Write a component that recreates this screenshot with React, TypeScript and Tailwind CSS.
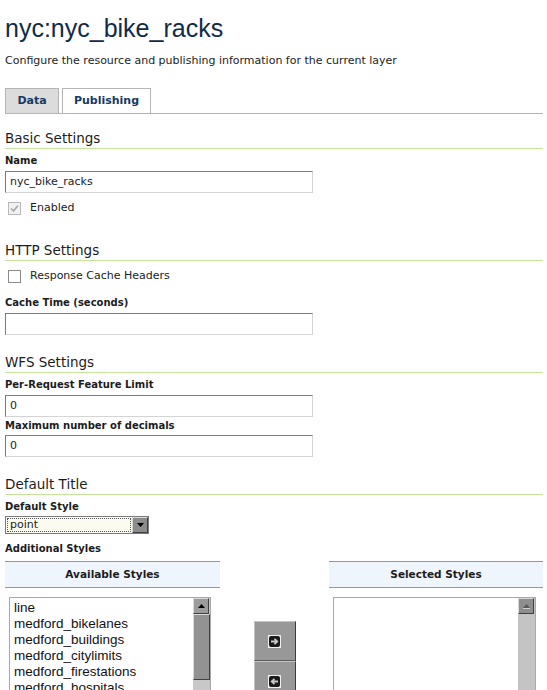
import React from 'react';

const ui = "font-['DejaVu_Sans',sans-serif]";

function SectionHeader({ title, className = '' }: { title: string; className?: string }) {
  return (
    <div
      className={`h-[21px] border-b border-[#c6e39a] text-[13.5px] leading-[20px] text-[#1c1c1c] ${className}`}
    >
      {title}
    </div>
  );
}

function Label({ text, className = '' }: { text: string; className?: string }) {
  return <div className={`h-4 text-[10px] font-bold leading-4 text-[#1c1c1c] ${className}`}>{text}</div>;
}

function TextInput({ value, className = '' }: { value: string; className?: string }) {
  return (
    <div
      className={`h-[22px] w-[308px] border border-t-[#7b7b7b] border-l-[#7b7b7b] border-r-[#d4d4d4] border-b-[#d4d4d4] bg-white pl-[4px] text-[11px] leading-[20px] text-[#222] ${className}`}
    >
      {value}
    </div>
  );
}

function Checkbox({ checked, disabled }: { checked?: boolean; disabled?: boolean }) {
  return (
    <div
      className={`mx-[3px] flex h-[13px] w-[13px] items-center justify-center border ${
        disabled ? 'border-[#b8b8b8] bg-[#f2f2f2]' : 'border-[#8a8a8a] bg-white'
      }`}
    >
      {checked && (
        <svg width="9" height="9" viewBox="0 0 9 9">
          <path d="M1 4.5 L3.5 7 L8 1.5" fill="none" stroke="#a8a8a8" strokeWidth="1.6" />
        </svg>
      )}
    </div>
  );
}

function ScrollUp({ disabled }: { disabled?: boolean }) {
  return (
    <div
      className={`flex h-[16px] w-[16px] items-center justify-center border border-t-[#d8d8d8] border-l-[#d8d8d8] border-r-[#404040] border-b-[#404040] ${
        disabled ? 'bg-[#8e8e8e]' : 'bg-[#9c9c9c]'
      }`}
    >
      <svg width="7" height="5" viewBox="0 0 7 5">
        <path d="M3.5 0 L7 4 L0 4 Z" fill={disabled ? '#5a5a5a' : '#000'} />
        {disabled && <path d="M0 4.5 H7" stroke="#cfcfcf" strokeWidth="1" />}
      </svg>
    </div>
  );
}

function MoveButton({ dir }: { dir: 'right' | 'left' }) {
  return (
    <div className="flex h-[40px] w-[42px] items-center justify-center border border-t-[#c4c4c4] border-l-[#c4c4c4] border-r-[#3c3c3c] border-b-[#5a5a5a] bg-[#989898]">
      <svg width="13" height="13" viewBox="0 0 13 13">
        <rect x="0" y="0" width="13" height="13" fill="#f0f0f0" />
        <rect x="1" y="1" width="11" height="11" rx="2" fill="#1a1a1a" />
        {dir === 'right' ? (
          <path d="M3 6.5 H9 M6.5 3.8 L9.3 6.5 L6.5 9.2" fill="none" stroke="#c8c8c8" strokeWidth="1.8" />
        ) : (
          <path d="M10 6.5 H4 M6.5 3.8 L3.7 6.5 L6.5 9.2" fill="none" stroke="#c8c8c8" strokeWidth="1.8" />
        )}
      </svg>
    </div>
  );
}

export default function App() {
  const available = [
    'line',
    'medford_bikelanes',
    'medford_buildings',
    'medford_citylimits',
    'medford_firestations',
    'medford_hospitals',
  ];

  return (
    <div className={`h-[690px] w-[547px] overflow-hidden bg-white pl-[5px] pr-[4px] ${ui}`}>
      {/* Title */}
      <div className="pt-[13px] font-['Liberation_Sans',sans-serif] text-[25px] leading-[30px] text-[#0f2b47]">
        nyc:nyc_bike_racks
      </div>
      <div className="mt-[10px] h-4 text-[11px] leading-4 text-[#222]">
        Configure the resource and publishing information for the current layer
      </div>

      {/* Tabs */}
      <div className="mt-[19px] flex h-[26px] items-end gap-[3px] border-b border-[#b4b4b4]">
        <div className="flex h-[25px] w-[54px] items-center justify-center border border-b-0 border-[#b4b4b4] bg-[#dcdcdc] text-[11px] font-bold text-[#173a63]">
          Data
        </div>
        <div className="flex h-[25px] w-[89px] items-center justify-center border border-b-0 border-[#b4b4b4] bg-white text-[11px] font-bold text-[#173a63]">
          Publishing
        </div>
      </div>

      {/* Basic Settings */}
      <SectionHeader title="Basic Settings" className="mt-[14px]" />
      <Label text="Name" className="mt-[4px]" />
      <TextInput value="nyc_bike_racks" className="mt-[2px]" />
      <div className="mt-[7px] flex h-4 items-center gap-[6px] text-[11px] text-[#222]">
        <Checkbox checked disabled />
        <span>Enabled</span>
      </div>

      {/* HTTP Settings */}
      <SectionHeader title="HTTP Settings" className="mt-[24px]" />
      <div className="mt-[7px] flex h-4 items-center gap-[6px] text-[11px] text-[#222]">
        <Checkbox />
        <span>Response Cache Headers</span>
      </div>
      <Label text="Cache Time (seconds)" className="mt-[11px]" />
      <TextInput value="" className="mt-[2px]" />

      {/* WFS Settings */}
      <SectionHeader title="WFS Settings" className="mt-[17px]" />
      <Label text="Per-Request Feature Limit" className="mt-[4px]" />
      <TextInput value="0" className="mt-[2px]" />
      <Label text="Maximum number of decimals" className="mt-[1px]" />
      <TextInput value="0" className="mt-[1px]" />

      {/* Default Title */}
      <SectionHeader title="Default Title" className="mt-[17px]" />
      <Label text="Default Style" className="mt-[4px]" />
      <div className="mt-[1px] flex h-[18px] w-[144px] border border-[#7b7b7b] bg-[#fbfbef]">
        <div className="m-[1px] flex-1 border border-dotted border-[#555] pl-[2px] text-[11px] leading-[12px] text-[#222]">
          point
        </div>
        <div className="flex w-[16px] items-center justify-center border border-t-[#d8d8d8] border-l-[#d8d8d8] border-r-[#404040] border-b-[#404040] bg-[#8c8c8c]">
          <svg width="7" height="4" viewBox="0 0 7 4">
            <path d="M0 0 H7 L3.5 4 Z" fill="#000" />
          </svg>
        </div>
      </div>
      <Label text="Additional Styles" className="mt-[7px]" />

      {/* Styles chooser */}
      <div className="mt-[4px] grid grid-cols-[215px_1fr_214px]">
        <div>
          <div className="flex h-[27px] items-center justify-center border-y border-[#7d9dbf] bg-[#eef5fd] text-[10.5px] font-bold text-[#1c1c1c]">
            Available Styles
          </div>
          <div className="ml-[4px] mt-[9px] flex h-[120px] w-[202px] border border-[#a8a8a8] bg-white">
            <div className="flex-1 pl-[4px] pt-[2px] font-['Liberation_Sans',sans-serif] text-[13.5px] leading-[16px] text-[#111]">
              {available.map((s) => (
                <div key={s}>{s}</div>
              ))}
            </div>
            <div className="flex w-[17px] flex-col bg-[#c8c8c8]">
              <ScrollUp />
              <div className="h-[66px] border border-t-[#d8d8d8] border-l-[#d8d8d8] border-r-[#404040] border-b-[#404040] bg-[#929292]" />
            </div>
          </div>
        </div>
        <div className="flex flex-col items-center pt-[60px]">
          <MoveButton dir="right" />
          <MoveButton dir="left" />
        </div>
        <div>
          <div className="flex h-[27px] items-center justify-center border-y border-[#7d9dbf] bg-[#eef5fd] text-[10.5px] font-bold text-[#1c1c1c]">
            Selected Styles
          </div>
          <div className="ml-[4px] mt-[9px] flex h-[120px] w-[203px] border border-[#a8a8a8] bg-white">
            <div className="flex-1" />
            <div className="flex w-[17px] flex-col bg-[#c4c4c4]">
              <ScrollUp disabled />
            </div>
          </div>
        </div>
      </div>
    </div>
  );
}
